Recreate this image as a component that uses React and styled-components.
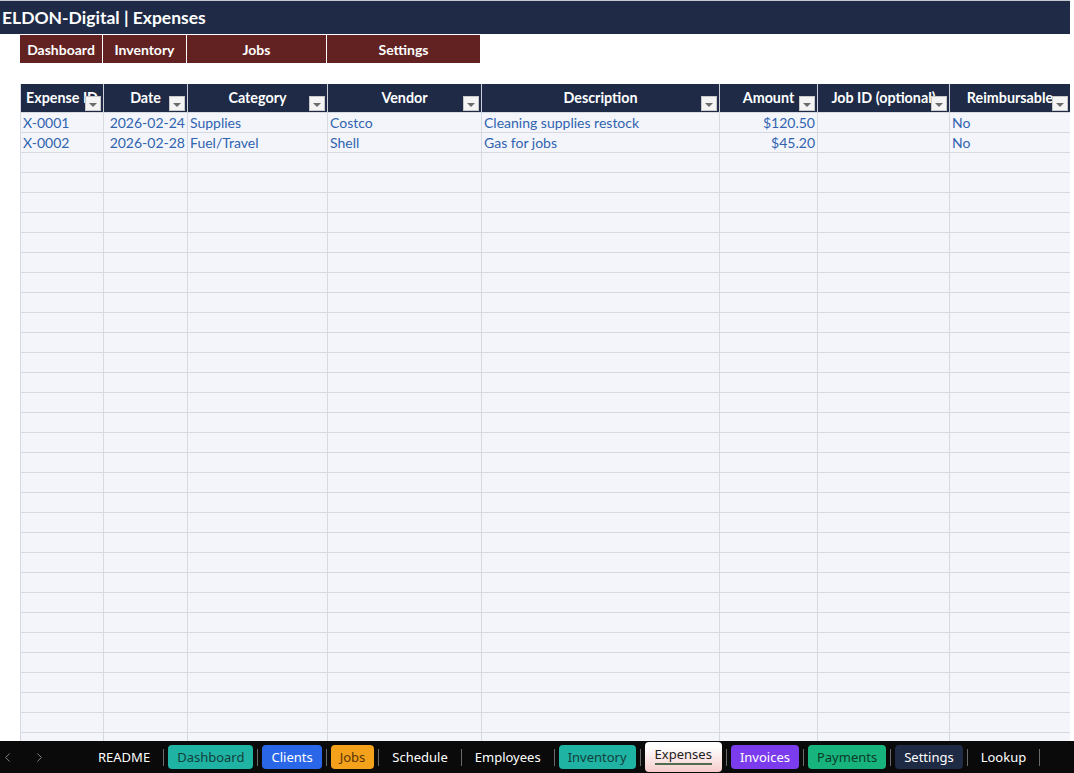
import React from 'react';
import styled, {createGlobalStyle} from 'styled-components';
import {ChevronLeft, ChevronRight} from 'lucide-react';

const GlobalStyle = createGlobalStyle`
html, body {
  margin:0;
  padding:0;
  height:100%;
  background:#fff;
}
#root {
  height:100%;
}
* {
  box-sizing:border-box;
}
`;

const NAVY = '#1e2a46';
const MAROON = '#622221';
const GRID = '#d5d9e2';

const columns = [
  {title: 'Expense ID', width: 83, align: 'left'},
  {title: 'Date', width: 84, align: 'right'},
  {title: 'Category', width: 140, align: 'left'},
  {title: 'Vendor', width: 154, align: 'left'},
  {title: 'Description', width: 238, align: 'left'},
  {title: 'Amount', width: 98, align: 'right'},
  {title: 'Job ID (optional)', width: 132, align: 'left'},
  {title: 'Reimbursable', width: 121, align: 'left'},
];

const expenses = [
  ['X-0001', '2026-02-24', 'Supplies', 'Costco', 'Cleaning supplies restock', '$120.50', '', 'No'],
  ['X-0002', '2026-02-28', 'Fuel/Travel', 'Shell', 'Gas for jobs', '$45.20', '', 'No'],
];

const EMPTY_ROWS = 30;

const navLinks = ['Dashboard', 'Inventory', 'Jobs', 'Settings'];

const sheetTabs = [
  {label: 'README'},
  {label: 'Dashboard', bg: '#1fb3a4', fg: '#123f3b'},
  {label: 'Clients', bg: '#2a67e8', fg: '#ffffff'},
  {label: 'Jobs', bg: '#f4a11c', fg: '#5a3608'},
  {label: 'Schedule'},
  {label: 'Employees'},
  {label: 'Inventory', bg: '#1fb3a4', fg: '#123f3b'},
  {label: 'Expenses', active: true},
  {label: 'Invoices', bg: '#7b3ced', fg: '#ffffff'},
  {label: 'Payments', bg: '#17b57d', fg: '#0d3a28'},
  {label: 'Settings', bg: '#1f2a44', fg: '#ffffff'},
  {label: 'Lookup'},
];

const gridTemplate = columns.map(c => c.width + 'px').join(' ');

const Page = styled.div`
height:100vh;
display:flex;
flex-direction:column;
overflow:hidden;
font-family:Lato, "Liberation Sans", sans-serif;
`;

const Sheet = styled.div`
flex:1;
overflow:hidden;
width:1070px;
`;

const TitleBar = styled.div`
height:34px;
border-top:1px solid #c4c8cf;
background:${NAVY};
color:#fff;
font-weight:700;
font-size:17.5px;
padding-left:2px;
display:flex;
align-items:center;
`;

const NavRow = styled.div`
display:grid;
grid-template-columns:${gridTemplate};
margin-top:1px;
margin-left:20px;
height:28px;
`;

const NavButton = styled.div`
background:${MAROON};
color:#fff;
font-weight:700;
font-size:14px;
display:flex;
align-items:center;
justify-content:center;
border-right:1px solid #fff;
`;

const Spacer = styled.div`
height:21px;
`;

const Table = styled.div`
display:grid;
grid-template-columns:${gridTemplate};
margin-left:20px;
border-left:1px solid ${GRID};
`;

const HeaderCell = styled.div`
position:relative;
height:29px;
background:${NAVY};
color:#fff;
font-weight:700;
font-size:14.3px;
display:flex;
align-items:center;
justify-content:center;
white-space:nowrap;
overflow:hidden;
border-right:1px solid #c9ced8;
border-bottom:1px solid ${GRID};
padding-bottom:2px;
`;

const FilterButton = styled.span`
position:absolute;
right:2px;
bottom:1px;
width:16px;
height:15px;
background:#f4f4f4;
border:1px solid #c8c8c8;
display:flex;
align-items:center;
justify-content:center;

&::after {
  content:'';
  border-left:4px solid transparent;
  border-right:4px solid transparent;
  border-top:4px solid #6b6b6b;
  margin-top:2px;
}
`;

const Cell = styled.div`
height:20px;
background:#f3f5fa;
color:#3063b0;
font-size:14px;
line-height:19px;
padding:0 2px;
text-align:${props => props.align};
white-space:nowrap;
overflow:hidden;
border-right:1px solid ${GRID};
border-bottom:1px solid ${GRID};
`;

const TabBar = styled.div`
height:32px;
flex-shrink:0;
background:#0a0a0a;
display:flex;
align-items:center;
font-family:"Noto Sans", "Open Sans", sans-serif;
font-size:13px;
`;

const Arrows = styled.div`
width:85px;
display:flex;
align-items:center;
gap:17px;
color:#8a8a8a;
`;

const Tab = styled.div`
height:24px;
margin:0 4px;
padding:0 9px;
border-radius:4px;
display:flex;
align-items:center;
background:${props => props.bg || 'transparent'};
color:${props => props.fg || '#ffffff'};
`;

const ActiveTab = styled.div`
height:30px;
margin:-1px 4px 0;
padding:0 10px;
border-radius:4px;
display:flex;
align-items:center;
background:linear-gradient(#ffffff 15%, #f6cccc);
color:#222;
`;

const ActiveLabel = styled.span`
border-bottom:2px solid #4f6b51;
line-height:18px;
margin-top:-3px;
`;

const Separator = styled.span`
width:1px;
height:17px;
background:#6a6a6a;
`;

const App = () => {
  const rows = [...expenses, ...Array.from({length: EMPTY_ROWS}, () => columns.map(() => ''))];
  return (
    <Page>
      <GlobalStyle/>
      <Sheet>
        <TitleBar>ELDON-Digital | Expenses</TitleBar>
        <NavRow>
          {navLinks.map(link => <NavButton key={link}>{link}</NavButton>)}
        </NavRow>
        <Spacer/>
        <Table>
          {columns.map(col => (
            <HeaderCell key={col.title}>
              {col.title}
              <FilterButton/>
            </HeaderCell>
          ))}
          {rows.map((row, r) =>
            row.map((value, c) => (
              <Cell key={r + '-' + c} align={columns[c].align}>{value}</Cell>
            ))
          )}
        </Table>
      </Sheet>
      <TabBar>
        <Arrows>
          <ChevronLeft size={15} strokeWidth={1.5}/>
          <ChevronRight size={15} strokeWidth={1.5}/>
        </Arrows>
        {sheetTabs.map(tab => (
          <React.Fragment key={tab.label}>
            {tab.active
              ? <ActiveTab><ActiveLabel>{tab.label}</ActiveLabel></ActiveTab>
              : <Tab bg={tab.bg} fg={tab.fg}>{tab.label}</Tab>}
            <Separator/>
          </React.Fragment>
        ))}
      </TabBar>
    </Page>
  );
};

export default App;
